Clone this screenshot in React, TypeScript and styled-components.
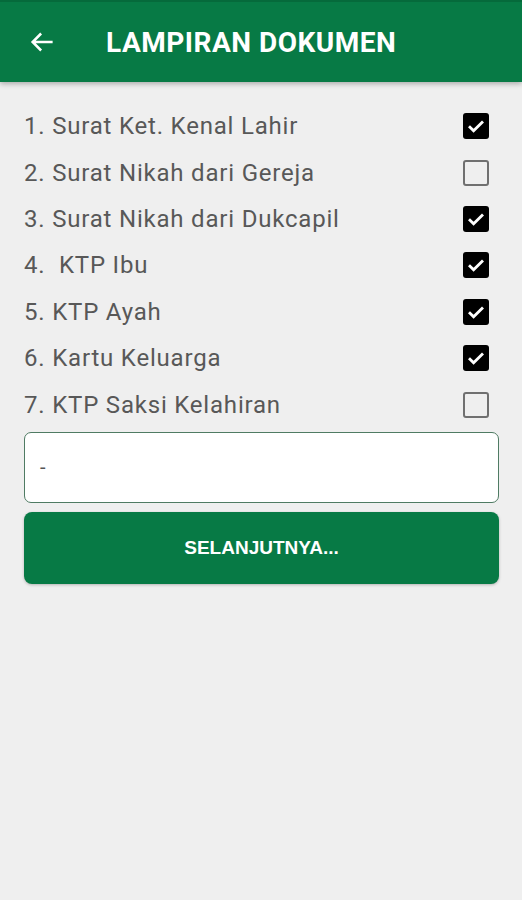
import React from "react";
import styled, { createGlobalStyle } from "styled-components";

const GlobalStyle = createGlobalStyle`
  html, body {
    margin: 0;
    padding: 0;
    background: #efefef;
  }
  body {
    font-family: Roboto, "Liberation Sans", sans-serif;
  }
`;

const Page = styled.div`
  width: 522px;
  min-height: 900px;
  background: #efefef;
`;

const Toolbar = styled.header`
  height: 82px;
  background: #077a45;
  display: flex;
  align-items: center;
  padding: 0 0 0 27px;
  box-sizing: border-box;
  border-top: 2px solid #056a3b;
  box-shadow: 0 2px 5px rgba(0, 0, 0, 0.28);
`;

const BackButton = styled.button`
  border: none;
  background: none;
  padding: 0;
  width: 30px;
  height: 30px;
  display: flex;
  align-items: center;
  justify-content: center;
  cursor: pointer;
`;

const Title = styled.h1`
  margin: 0 0 0 49px;
  color: #fff;
  font-family: Roboto, "Liberation Sans", sans-serif;
  font-weight: 700;
  font-size: 28px;
  letter-spacing: 0.5px;
`;

const Content = styled.main`
  padding: 21px 23px 0 24px;
  display: flex;
  flex-direction: column;
`;

const Row = styled.label`
  height: 46.4px;
  display: flex;
  align-items: center;
  justify-content: space-between;
  padding-right: 10px;
`;

const Label = styled.span`
  font-size: 24px;
  letter-spacing: 0.8px;
  color: #585858;
  white-space: pre;
`;

const Box = styled.span<{ $checked: boolean }>`
  width: 26px;
  height: 26px;
  box-sizing: border-box;
  border-radius: 3px;
  display: flex;
  align-items: center;
  justify-content: center;
  background: ${(p) => (p.$checked ? "#000" : "transparent")};
  border: ${(p) => (p.$checked ? "none" : "2.5px solid #707070")};
`;

const Note = styled.div`
  margin-top: 4px;
  height: 71px;
  background: #fff;
  border: 1.5px solid #4f7b63;
  border-radius: 7px;
  box-sizing: border-box;
  display: flex;
  align-items: center;
  padding-left: 15px;
  font-size: 20px;
  color: #555;
`;

const NextButton = styled.button`
  margin-top: 9px;
  height: 72px;
  border: none;
  border-radius: 8px;
  background: #077a45;
  color: #fff;
  font-family: "Liberation Sans", Arial, sans-serif;
  font-weight: 700;
  font-size: 19px;
  box-shadow: 0 1px 3px rgba(0, 0, 0, 0.25);
  cursor: pointer;
`;

const docs = [
  { label: "1. Surat Ket. Kenal Lahir", checked: true },
  { label: "2. Surat Nikah dari Gereja", checked: false },
  { label: "3. Surat Nikah dari Dukcapil", checked: true },
  { label: "4.  KTP Ibu", checked: true },
  { label: "5. KTP Ayah", checked: true },
  { label: "6. Kartu Keluarga", checked: true },
  { label: "7. KTP Saksi Kelahiran", checked: false },
];

const Check = () => (
  <svg width="18" height="14" viewBox="0 0 18 14">
    <path d="M2 7.2 L6.6 11.8 L16 2.4" fill="none" stroke="#fff" strokeWidth="2.8" />
  </svg>
);

export default function App() {
  return (
    <Page>
      <GlobalStyle />
      <Toolbar>
        <BackButton>
          <svg width="30" height="30" viewBox="0 0 24 24">
            <path d="M20.5 12H4.5M11.3 5.2 4.5 12l6.8 6.8" fill="none" stroke="#fff" strokeWidth="2" />
          </svg>
        </BackButton>
        <Title>LAMPIRAN DOKUMEN</Title>
      </Toolbar>
      <Content>
        {docs.map((d) => (
          <Row key={d.label}>
            <Label>{d.label}</Label>
            <Box $checked={d.checked}>{d.checked && <Check />}</Box>
          </Row>
        ))}
        <Note>-</Note>
        <NextButton>SELANJUTNYA...</NextButton>
      </Content>
    </Page>
  );
}
